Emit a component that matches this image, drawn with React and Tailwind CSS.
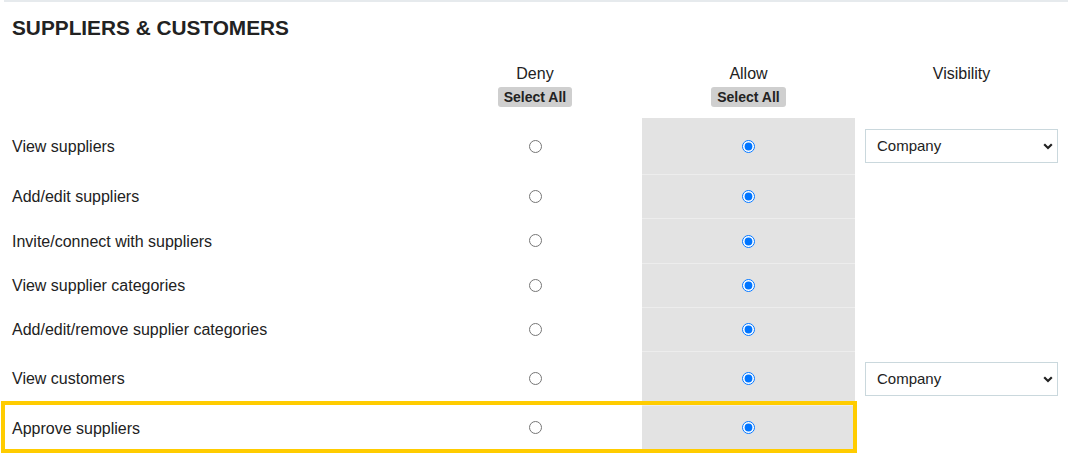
import { useState } from 'react';

const rows = [
  { label: 'View suppliers', h: 'h-[56px]', visibility: true },
  { label: 'Add/edit suppliers', h: 'h-[44px]' },
  { label: 'Invite/connect with suppliers', h: 'h-[45px]' },
  { label: 'View supplier categories', h: 'h-[44px]' },
  { label: 'Add/edit/remove supplier categories', h: 'h-[44px]' },
  { label: 'View customers', h: 'h-[54px]', visibility: true },
  { label: 'Approve suppliers', h: 'h-[44px]', highlight: true },
];

function VisibilitySelect() {
  return (
    <div className="relative w-full">
      <select
        defaultValue="company"
        className="w-full h-[34px] appearance-none border border-[#cad8dd] bg-white pl-[11px] pr-8 text-[15px] text-[#222] outline-none"
      >
        <option value="company">Company</option>
        <option value="team">Team</option>
        <option value="own">Own</option>
      </select>
      <svg
        className="absolute right-[5px] top-[14px] pointer-events-none"
        width="10"
        height="7"
        viewBox="0 0 10 7"
        fill="none"
      >
        <path d="M1.2 1.3 L5 5 L8.8 1.3" stroke="#222" strokeWidth="2.2" />
      </svg>
    </div>
  );
}

function SelectAllButton({ onClick }) {
  return (
    <button
      onClick={onClick}
      className="mt-[4px] h-[20px] px-[6px] rounded-[3px] bg-[#cfcfcf] text-[14px] leading-[20px] font-bold text-[#222]"
    >
      Select All
    </button>
  );
}

export default function App() {
  const [values, setValues] = useState(rows.map(() => 'allow'));

  const setAll = (v) => setValues(rows.map(() => v));
  const setOne = (i, v) => setValues(values.map((x, j) => (j === i ? v : x)));

  return (
    <div className="w-[1068px] min-h-[471px] bg-white text-[#222]" style={{ fontFamily: '"Liberation Sans", Arial, sans-serif' }}>
      <div className="ml-[4px] h-[2px] bg-[#e6eaed]" />
      <h2 className="mt-[14px] pl-[12px] text-[20.8px] leading-[24px] font-bold">SUPPLIERS &amp; CUSTOMERS</h2>

      {/* header */}
      <div className="flex h-[78px] text-[16px] leading-[19px]">
        <div className="w-[428px]" />
        <div className="w-[214px] flex flex-col items-center pt-[24px]">
          <span>Deny</span>
          <SelectAllButton onClick={() => setAll('deny')} />
        </div>
        <div className="w-[213px] flex flex-col items-center pt-[24px]">
          <span>Allow</span>
          <SelectAllButton onClick={() => setAll('allow')} />
        </div>
        <div className="w-[213px] flex flex-col items-center pt-[24px]">
          <span>Visibility</span>
        </div>
      </div>

      {rows.map((r, i) => (
        <div key={r.label} className={`flex ${r.h} text-[16px]`}>
          <div className="relative flex">
            <div className={`w-[428px] flex items-center pl-[12px] ${r.highlight ? 'pt-[4px]' : 'pt-[2px]'}`}>{r.label}</div>
            <div className="w-[214px] flex items-center justify-center">
              <input
                type="radio"
                name={`perm-${i}`}
                checked={values[i] === 'deny'}
                onChange={() => setOne(i, 'deny')}
                className="m-0 w-[13px] h-[13px]"
              />
            </div>
            <div className={`w-[213px] flex items-center justify-center bg-[#e3e3e3] ${i > 0 ? 'border-t border-[#ededed]' : ''}`}>
              <input
                type="radio"
                name={`perm-${i}`}
                checked={values[i] === 'allow'}
                onChange={() => setOne(i, 'allow')}
                className="m-0 w-[13px] h-[13px]"
              />
            </div>
            {r.highlight && (
              <span className="absolute left-[1px] right-[-2px] top-[-4px] bottom-[-4px] border-4 border-[#ffcc00] pointer-events-none" />
            )}
          </div>
          <div className="w-[213px] flex items-start pt-[11px] px-[10px]">
            {r.visibility && <VisibilitySelect />}
          </div>
        </div>
      ))}
    </div>
  );
}
